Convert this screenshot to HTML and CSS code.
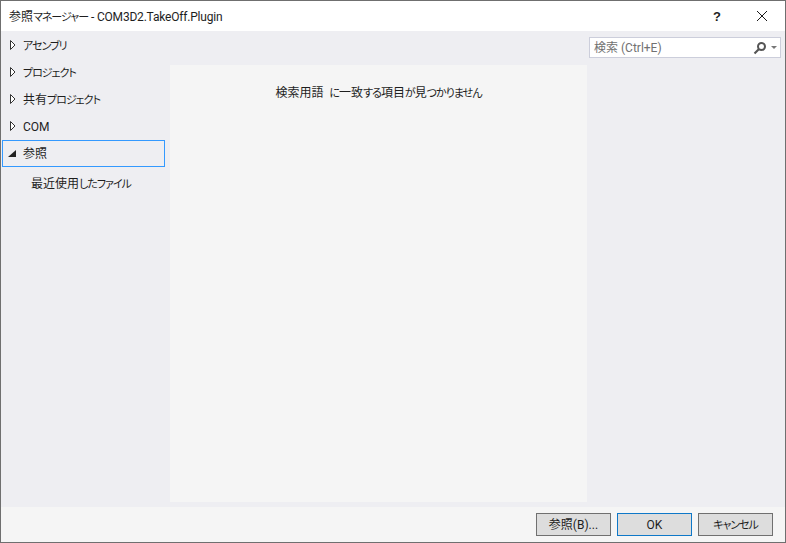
FILE: index.html
```html
<!DOCTYPE html>
<html lang="ja">
<head>
<meta charset="utf-8">
<title>参照マネージャー</title>
<link rel="stylesheet" href="styles.css">
</head>
<body>
<div class="window">
  <header class="titlebar">
    <span class="title">参照<span class="k">マネージャー</span> <span class="latin">- COM3D2.TakeOff.Plugin</span></span>
    <span class="help">?</span>
    <svg class="close" width="12" height="12" viewBox="0 0 12 12"><path d="M1 1L11 11M11 1L1 11" stroke="#1a1a1a" stroke-width="1" fill="none"/></svg>
  </header>
  <div class="main">
    <nav class="side">
      <div class="node"><svg class="arrow" width="6" height="10" viewBox="0 0 6 10"><path d="M.5 .5L5 5L.5 9.5Z" fill="#fff" stroke="#333" stroke-width="1"/></svg><span class="label k">アセンブリ</span></div>
      <div class="node"><svg class="arrow" width="6" height="10" viewBox="0 0 6 10"><path d="M.5 .5L5 5L.5 9.5Z" fill="#fff" stroke="#333" stroke-width="1"/></svg><span class="label k">プロジェクト</span></div>
      <div class="node"><svg class="arrow" width="6" height="10" viewBox="0 0 6 10"><path d="M.5 .5L5 5L.5 9.5Z" fill="#fff" stroke="#333" stroke-width="1"/></svg><span class="label">共有<span class="k">プロジェクト</span></span></div>
      <div class="node"><svg class="arrow" width="6" height="10" viewBox="0 0 6 10"><path d="M.5 .5L5 5L.5 9.5Z" fill="#fff" stroke="#333" stroke-width="1"/></svg><span class="label">COM</span></div>
      <div class="node selected"><svg class="arrow" width="8" height="7" viewBox="0 0 8 7"><path d="M8 0V7H0Z" fill="#222"/></svg><span class="label">参照</span></div>
      <div class="leaf">最近使用<span class="k">したファイル</span></div>
    </nav>
    <section class="center">
      <div class="toprow"></div>
      <div class="results">検索用語&nbsp; <span class="k">に</span>一致<span class="k">する</span>項目<span class="k">が</span>見<span class="k">つかりません</span></div>
    </section>
    <aside class="right">
      <div class="search">
        <span class="placeholder">検索 (Ctrl+E)</span>
        <svg class="lens" width="14" height="14" viewBox="0 0 14 14"><circle cx="8.5" cy="5.5" r="3.5" fill="none" stroke="#555" stroke-width="2"/><path d="M6 8L1.5 12.5" stroke="#555" stroke-width="2.2" fill="none"/></svg>
        <svg class="drop" width="6" height="3" viewBox="0 0 6 3"><path d="M0 0H6L3 3Z" fill="#777"/></svg>
      </div>
    </aside>
  </div>
  <footer class="footer">
    <button class="btn">参照(B)...</button>
    <button class="btn default">OK</button>
    <button class="btn k">キャンセル</button>
  </footer>
</div>
</body>
</html>
```
FILE: styles.css
```css
* { box-sizing: border-box; }
html, body { margin: 0; padding: 0; }
body {
  width: 786px;
  height: 543px;
  overflow: hidden;
  font-family: "Roboto", "Noto Sans CJK JP", sans-serif;
  font-size: 12px;
  font-feature-settings: "palt";
  color: #1e1e1e;
}
.k { font-size: 11px; letter-spacing: -1px; }
.latin { letter-spacing: -0.2px; }
.window {
  width: 786px;
  height: 543px;
  border: 1px solid #6f6f6f;
  display: flex;
  flex-direction: column;
  background: #f5f5f5;
}
.titlebar {
  height: 30px;
  background: #fff;
  display: flex;
  align-items: center;
  padding-left: 8px;
  flex: none;
}
.title { flex: 1; line-height: 30px; padding-top: 2px; }
.help { width: 12px; margin-right: 33px; font-family: "Liberation Sans", sans-serif; font-size: 13px; font-weight: bold; text-align: center; }
.close { margin-right: 17px; }
.main {
  height: 476px;
  flex: none;
  background: #eeeef2;
  display: flex;
}
.side {
  width: 169px;
  flex: none;
  padding: 0 0 0 1px;
  display: flex;
  flex-direction: column;
}
.node {
  width: 163px;
  height: 27px;
  display: flex;
  align-items: center;
  padding-left: 7px;
  border: 1px solid transparent;
}
.label { margin-left: 7px; line-height: 25px; padding-top: 4px; }
.node .arrow { flex: none; }
.selected { border-color: #3399ff; margin-top: 1px; padding-left: 5px; }
.selected .label { margin-left: 7px; padding-top: 2px; }
.leaf { height: 34px; padding-left: 29px; line-height: 34px; }
.center {
  width: 417px;
  flex: none;
  display: flex;
  flex-direction: column;
}
.toprow { height: 34px; flex: none; }
.results {
  height: 437px;
  flex: none;
  background: #f5f5f5;
  text-align: center;
  padding-top: 18px;
  line-height: 20px;
}
.right { flex: 1; padding: 6px 4px 0 2px; }
.search {
  height: 21px;
  background: #fff;
  border: 1px solid #cccedb;
  display: flex;
  align-items: center;
  padding-left: 4px;
}
.placeholder { flex: 1; color: #717171; line-height: 19px; padding-top: 1px; }
.lens { margin-right: 4px; }
.drop { margin-right: 3px; }
.footer {
  flex: 1;
  display: flex;
  justify-content: flex-end;
  gap: 6px;
  padding: 6px 12px 0 0;
}
.btn {
  width: 75px;
  height: 23px;
  padding: 1px 0 0;
  background: #dddddd;
  border: 1px solid #707070;
  font-family: inherit;
  font-size: 12px;
  font-feature-settings: "palt";
  color: #1e1e1e;
  line-height: 21px;
}
.btn.k { font-size: 11px; }
.default { border-color: #0f78c8; }
```
